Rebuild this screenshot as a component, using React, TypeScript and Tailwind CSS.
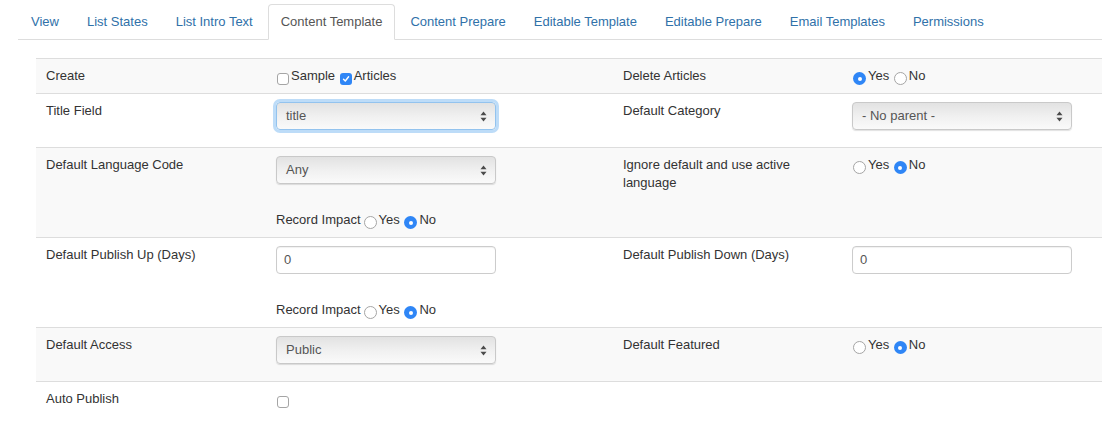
import React from 'react';

const tabs = [
  'View',
  'List States',
  'List Intro Text',
  'Content Template',
  'Content Prepare',
  'Editable Template',
  'Editable Prepare',
  'Email Templates',
  'Permissions',
];

function Radio({ checked }: { checked?: boolean }) {
  return checked ? (
    <span className="inline-flex items-center justify-center w-[13px] h-[13px] rounded-full bg-[#2f86f6] align-top relative top-[5px] mx-[1px]">
      <span className="w-[4px] h-[4px] rounded-full bg-white" />
    </span>
  ) : (
    <span className="inline-block w-[13px] h-[13px] rounded-full border border-[#a5a5a5] bg-white align-top relative top-[5px] mx-[1px]" />
  );
}

function Checkbox({ checked }: { checked?: boolean }) {
  return checked ? (
    <span className="inline-flex items-center justify-center w-[12px] h-[12px] rounded-[3px] bg-[#2f86f6] align-top relative top-[6px] mx-[1px]">
      <svg width="8" height="8" viewBox="0 0 8 8">
        <path d="M1.5 4.2 L3.3 6 L6.6 1.8" fill="none" stroke="white" strokeWidth="1.4" strokeLinecap="round" strokeLinejoin="round" />
      </svg>
    </span>
  ) : (
    <span className="inline-block w-[12px] h-[12px] rounded-[3px] border border-[#a5a5a5] bg-white align-top relative top-[6px] mx-[1px]" />
  );
}

function YesNo({ yes }: { yes?: boolean }) {
  return (
    <span className="whitespace-nowrap">
      <Radio checked={yes} />
      <span className="ml-[1px]">Yes</span> <Radio checked={!yes} />
      <span className="ml-[1px]">No</span>
    </span>
  );
}

function Select({ value, focus }: { value: string; focus?: boolean }) {
  return (
    <div
      className={
        'flex items-center justify-between w-[220px] h-[28px] rounded-[4px] border bg-linear-to-b from-[#e2e2e2] via-[#f0f0f0] to-[#fafafa] pl-[9px] pr-[8px] text-[#555] ' +
        (focus
          ? 'border-[#93c3ee] shadow-[0_0_0_3px_#bddcf8]'
          : 'border-[#c9c9c9] shadow-[0_1px_1px_rgba(0,0,0,0.12)]')
      }
    >
      <span>{value}</span>
      <svg width="7" height="11" viewBox="0 0 7 11">
        <path d="M3.5 0.5 L6.5 4.3 L0.5 4.3 Z" fill="#4a4a4a" />
        <path d="M3.5 10.5 L6.5 6.7 L0.5 6.7 Z" fill="#4a4a4a" />
      </svg>
    </div>
  );
}

function TextInput({ value }: { value: string }) {
  return (
    <div className="w-[220px] h-[28px] rounded-[4px] border border-[#cccccc] bg-white pl-[7px] leading-[26px] text-[#555] shadow-[inset_0_1px_1px_rgba(0,0,0,0.06)]">
      {value}
    </div>
  );
}

function RecordImpact() {
  return (
    <div className="mt-[27px]">
      Record Impact
      <span className="ml-[2px]" />
      <Radio />
      <span className="ml-[1px]">Yes</span> <Radio checked />
      <span className="ml-[1px]">No</span>
    </div>
  );
}

const td = 'px-[10px] pt-[8px] pb-[8px] align-top border-t border-[#dddddd]';

export default function App() {
  return (
    <div
      className="min-h-screen bg-white text-[13px] leading-[18px] text-[#333] pt-[4px] overflow-hidden"
      style={{ fontFamily: '"Liberation Sans", Arial, Helvetica, sans-serif' }}
    >
      {/* tabs */}
      <ul className="flex ml-[18px] border-b border-[#dddddd] mb-[18px]">
        {tabs.map(t => {
          const active = t === 'Content Template';
          return (
            <li key={t} className="-mb-px">
              <span
                className={
                  'block px-[12px] py-[8px] leading-[18px] mr-[2px] rounded-t-[4px] border ' +
                  (active
                    ? 'border-[#dddddd] border-b-white bg-white text-[#555]'
                    : 'border-transparent text-[#3071a9]')
                }
              >
                {t}
              </span>
            </li>
          );
        })}
      </ul>

      {/* form table */}
      <table className="ml-[36px] w-[1066px] table-fixed border-collapse">
        <colgroup>
          <col className="w-[230px]" />
          <col className="w-[347px]" />
          <col className="w-[229px]" />
          <col />
        </colgroup>
        <tbody>
          <tr className="bg-[#f9f9f9]">
            <td className={td}>Create</td>
            <td className={td}>
              <Checkbox />
              <span className="ml-[1px]">Sample</span> <Checkbox checked />
              <span className="ml-[1px]">Articles</span>
            </td>
            <td className={td}>Delete Articles</td>
            <td className={td}>
              <YesNo yes />
            </td>
          </tr>
          <tr>
            <td className={td}>Title Field</td>
            <td className={td}>
              <div className="mb-[9px]">
                <Select value="title" focus />
              </div>
            </td>
            <td className={td}>Default Category</td>
            <td className={td}>
              <div className="mb-[9px]">
                <Select value="- No parent -" />
              </div>
            </td>
          </tr>
          <tr className="bg-[#f9f9f9]">
            <td className={td}>Default Language Code</td>
            <td className={td}>
              <Select value="Any" />
              <RecordImpact />
            </td>
            <td className={td}>
              Ignore default and use active
              <br />
              language
            </td>
            <td className={td}>
              <YesNo />
            </td>
          </tr>
          <tr>
            <td className={td}>Default Publish Up (Days)</td>
            <td className={td}>
              <TextInput value="0" />
              <RecordImpact />
            </td>
            <td className={td}>Default Publish Down (Days)</td>
            <td className={td}>
              <TextInput value="0" />
            </td>
          </tr>
          <tr className="bg-[#f9f9f9]">
            <td className={td}>Default Access</td>
            <td className={td}>
              <div className="mb-[9px]">
                <Select value="Public" />
              </div>
            </td>
            <td className={td}>Default Featured</td>
            <td className={td}>
              <YesNo />
            </td>
          </tr>
          <tr>
            <td className={td}>Auto Publish</td>
            <td className={td}>
              <Checkbox />
            </td>
            <td className={td}></td>
            <td className={td}></td>
          </tr>
        </tbody>
      </table>
    </div>
  );
}
